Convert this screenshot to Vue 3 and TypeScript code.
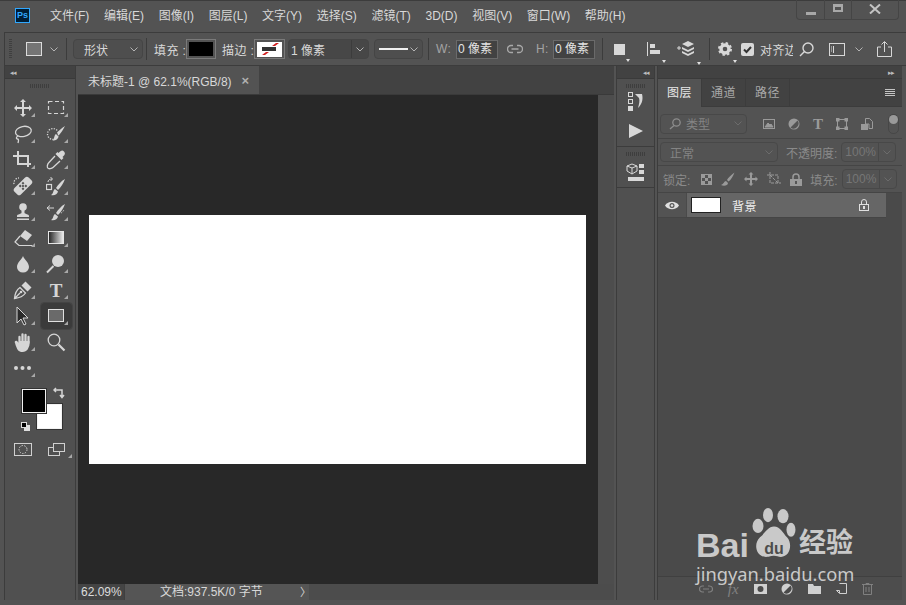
<template>
  <div class="app">
    <header class="titlebar">
      <div class="logo">Ps</div>
      <nav class="menu">
        <span v-for="m in menus" :key="m">{{ m }}</span>
      </nav>
      <div class="winbtns">
        <span class="wb wb-a"><i class="wb-min"></i></span>
        <span class="wb wb-b"><i class="wb-max"></i></span>
        <span class="wb wb-close">
          <svg viewBox="0 0 12 10" width="12" height="10" fill="none" stroke="#c4c4c4" stroke-width="2"><path d="M1 0.5l10 9M11 0.5l-10 9" /></svg>
        </span>
      </div>
    </header>

    <section class="options">
      <span class="grip-v"></span>
      <span class="shape-pick m14"></span>
      <svg class="chev m8" viewBox="0 0 8 5"><path d="M.5.5L4 4 7.5.5" /></svg>
      <span class="sep m8"></span>
      <div class="select w70 m6"><span>形状</span><svg class="chev" viewBox="0 0 8 5"><path d="M.5.5L4 4 7.5.5" /></svg></div>
      <span class="sep m3"></span>
      <span class="lab m7 w29">填充 :</span>
      <span class="swatch swatch-fill m3"><i class="fill-black"></i></span>
      <span class="lab m6 w28">描边 :</span>
      <span class="swatch m4">
        <svg viewBox="0 0 25 15" width="25" height="15">
          <rect width="25" height="15" fill="#fff" />
          <rect x="5" y="5" width="14" height="4" fill="#333" />
          <path d="M15 4l4-3h3l-4 3zM5 13l4-3h3l-4 3z" fill="#d21f1f" />
        </svg>
      </span>
      <div class="select w81 m3 split"><span>1 像素</span><b></b><svg class="chev" viewBox="0 0 8 5"><path d="M.5.5L4 4 7.5.5" /></svg></div>
      <div class="select w49 m5 line"><i></i><svg class="chev" viewBox="0 0 8 5"><path d="M.5.5L4 4 7.5.5" /></svg></div>
      <span class="sep m5"></span>
      <span class="lab dim m7 w14">W:</span>
      <span class="num m6">0 像素</span>
      <svg class="m9" viewBox="0 0 16 10" width="16" height="10" fill="none" stroke="#a8a8a8" stroke-width="1.3"><path d="M6 1.5H4a3.5 3.5 0 000 7h2M10 1.5h2a3.5 3.5 0 010 7h-2M4.5 5h7" /></svg>
      <span class="lab dim m13 w12">H:</span>
      <span class="num m5">0 像素</span>
      <span class="sep m7"></span>
      <span class="opt-ic m11 more-w"><i class="sq"></i></span>
      <span class="opt-ic m22 more-w">
        <svg viewBox="0 0 14 14" width="14" height="14" fill="#d8d8d8"><rect width="1" height="14" /><rect x="3" y="2" width="5" height="4" /><rect x="3" y="8" width="10" height="4" /></svg>
      </span>
      <span class="opt-ic m15 more-w">
        <svg viewBox="0 0 20 18" width="20" height="18" fill="#d8d8d8"><path d="M12 1l6 3-6 3-6-3zM6 7l6 3 6-3v2l-6 3-6-3zM6 11l6 3 6-3v2l-6 3-6-3zM1 7.500h1.500V6H3.500v1.500H5v1H3.500V10H2.500V8.500H1z" /></svg>
      </span>
      <span class="sep m13"></span>
      <span class="opt-ic m8 more-w">
        <svg viewBox="0 0 14 14" width="14" height="14"><circle cx="7" cy="7" r="4" fill="none" stroke="#d8d8d8" stroke-width="3.400" /><circle cx="7" cy="7" r="6" fill="none" stroke="#d8d8d8" stroke-width="2" stroke-dasharray="2.400 2.300" /></svg>
      </span>
      <span class="check m9">
        <svg viewBox="0 0 13 13" width="13" height="13"><path d="M3 6.500l2.500 2.500L10 4" fill="none" stroke="#333" stroke-width="2" /></svg>
      </span>
      <span class="lab snap m6">对齐边</span>
      <svg class="m6" viewBox="0 0 15 15" width="15" height="15" fill="none" stroke="#d8d8d8" stroke-width="1.400"><circle cx="9" cy="6" r="5" /><path d="M5.500 9.500L1 14" /></svg>
      <svg class="m15" viewBox="0 0 16 13" width="16" height="13" fill="none" stroke="#d8d8d8"><rect x=".5" y=".5" width="15" height="12" /><path d="M4.500 3v7M2 4h1M2 6h1M2 8h1" /></svg>
      <svg class="chev m10" viewBox="0 0 8 5"><path d="M.5.5L4 4 7.5.5" /></svg>
      <svg class="m14" viewBox="0 0 15 16" width="15" height="16" fill="none" stroke="#d8d8d8"><path d="M4 6H.5v9.500h14V6H11M7.500 11V1M4.500 3.500l3-3 3 3" /></svg>
    </section>

    <main class="workspace">
      <aside class="toolbox">
        <div class="strip"><span class="arrows">◂◂</span></div>
        <div class="grip-h"></div>
        <div class="tools">
          <div
            v-for="t in tools"
            :key="t.name"
            class="tool"
            :class="{ active: t.name === 'rect', more: t.more !== false }"
            :title="t.name"
          >
            <svg viewBox="0 0 20 20" width="20" height="20" v-html="t.svg"></svg>
          </div>
        </div>
        <div class="dots-row">
          <div class="tool more">
            <svg viewBox="0 0 20 20" width="20" height="20" fill="#d6d6d6"><circle cx="3" cy="10" r="2" /><circle cx="9.500" cy="10" r="2" /><circle cx="16" cy="10" r="2" /></svg>
          </div>
        </div>
        <div class="colors">
          <span class="bg-color"></span>
          <span class="fg-color"></span>
          <svg class="swap" viewBox="0 0 12 12" width="12" height="12" fill="none" stroke="#d6d6d6" stroke-width="1.500"><path d="M1 3h8v7M3 1L1 3l2 2M7 8l2 2.500L11 8" /></svg>
          <span class="mini-bg"></span>
          <span class="mini-fg"></span>
        </div>
        <div class="modes">
          <svg viewBox="0 0 18 13" width="18" height="13" fill="none" stroke="#d0d0d0"><rect x=".5" y=".5" width="17" height="12" /><circle cx="9" cy="6.500" r="4" stroke-dasharray="1.500 1.300" /></svg>
          <div class="tool-mode more">
            <svg viewBox="0 0 17 13" width="17" height="13" fill="none" stroke="#d0d0d0"><rect x=".5" y="4.500" width="11" height="8" /><rect x="5.500" y=".5" width="11" height="8" fill="#505050" /></svg>
          </div>
        </div>
      </aside>

      <section class="doc">
        <div class="tabs">
          <div class="tab">未标题-1 @ 62.1%(RGB/8)<span class="close">×</span></div>
        </div>
        <div class="doc-body">
          <div class="canvas"><div class="page"></div></div>
          <div class="vscroll"></div>
        </div>
        <footer class="status">
          <span class="zoom-val">62.09%</span>
          <span class="doc-info">文档:937.5K/0 字节<i>〉</i></span>
          <span class="hscroll"></span>
        </footer>
      </section>

      <aside class="dock">
        <div class="strip strip-right"><span class="arrows">◂◂</span></div>
        <div class="dock-sec first">
          <div class="grip-h"></div>
          <svg class="d-hist" viewBox="0 0 20 20" width="20" height="20">
            <g fill="none" stroke="#d8d8d8"><rect x="2.500" y=".5" width="4" height="4" /><rect x="2.500" y="7.500" width="4" height="4" /></g>
            <rect x="2" y="14" width="5" height="5" fill="#d8d8d8" />
            <path d="M9 2h7c1 4 1 9-4 14 1-4 2-7 1-10z" fill="#d8d8d8" />
          </svg>
          <svg class="play" viewBox="0 0 14 14" width="14" height="14"><path d="M0 0l14 7L0 14z" fill="#d8d8d8" /></svg>
        </div>
        <div class="dock-sec">
          <div class="grip-h"></div>
          <svg class="d-3d" viewBox="0 0 20 20" width="20" height="20">
            <path d="M6 1l5 2v5l-5 3-5-3V3z" fill="none" stroke="#d8d8d8" />
            <path d="M1 3l5 2 5-2M6 5v6" fill="none" stroke="#d8d8d8" />
            <rect x="13" y="1" width="5" height="4" fill="#d8d8d8" /><rect x="13" y="7" width="5" height="4" fill="#d8d8d8" />
            <rect x="2" y="14" width="16" height="4" fill="#d8d8d8" />
          </svg>
        </div>
        <div class="dock-rest"></div>
      </aside>

      <aside class="panel">
        <div class="strip strip-panel"><span class="arrows right">▸▸</span></div>
        <div class="ptabs">
          <span class="ptab on">图层</span>
          <span class="ptab">通道</span>
          <span class="ptab">路径</span>
          <span class="burger"><i></i><i></i><i></i><i></i></span>
        </div>
        <div class="prow filter">
          <div class="pselect w87">
            <svg viewBox="0 0 12 12" width="12" height="12" fill="none" stroke="#8c8c8c" stroke-width="1.300"><circle cx="7.500" cy="4.500" r="3.700" /><path d="M5 7.500L1 11" /></svg>
            <span>类型</span>
            <svg class="chev dimmed" viewBox="0 0 8 5"><path d="M.5.5L4 4 7.5.5" /></svg>
          </div>
          <div class="filter-icons">
            <svg viewBox="0 0 12 10" width="12" height="10" fill="none" stroke="#9a9a9a"><rect x=".5" y=".5" width="11" height="9" /><path d="M2 8l3-4 2 2 1-1 2 3z" fill="#9a9a9a" /></svg>
            <svg viewBox="0 0 12 12" width="12" height="12"><circle cx="6" cy="6" r="5.500" fill="#9a9a9a" /><path d="M9.500 2.500a5 5 0 01-7 7z" fill="#555" /></svg>
            <span class="t-glyph">T</span>
            <svg viewBox="0 0 12 12" width="12" height="12" fill="none" stroke="#9a9a9a"><rect x="1.500" y="1.500" width="9" height="9" /><g fill="#9a9a9a"><rect width="3" height="3" /><rect x="9" width="3" height="3" /><rect y="9" width="3" height="3" /><rect x="9" y="9" width="3" height="3" /></g></svg>
            <svg viewBox="0 0 12 12" width="12" height="12" fill="#9a9a9a"><path d="M4.500.5h4l3 3v7H8V6H4.500z" fill="none" stroke="#9a9a9a" /><rect y="6" width="7" height="6" /></svg>
          </div>
          <span class="toggle"><i></i></span>
        </div>
        <div class="prow mode">
          <div class="pselect w118"><span class="blend">正常</span><svg class="chev dimmed" viewBox="0 0 8 5"><path d="M.5.5L4 4 7.5.5" /></svg></div>
          <span class="plab op">不透明度:</span>
          <div class="pinput"><span>100%</span><b></b><svg class="chev dimmed" viewBox="0 0 8 5"><path d="M.5.5L4 4 7.5.5" /></svg></div>
        </div>
        <div class="prow lock">
          <span class="plab lock-lab">锁定:</span>
          <div class="lock-icons">
            <svg viewBox="0 0 11 11" width="11" height="11"><rect x=".5" y=".5" width="10" height="10" fill="none" stroke="#9a9a9a" /><path d="M1 1h3v3H1zM7 1h3v3H7zM4 4h3v3H4zM1 7h3v3H1zM7 7h3v3H7z" fill="#9a9a9a" /></svg>
            <svg viewBox="0 0 14 14" width="14" height="14" fill="#9a9a9a"><path d="M13.500.5C10 3 7 6 6 8l1.500 1.500C10 8 12 4 13.500.5zM5 9C3 9 3 12 0 13c3 1.500 7 .5 7-2z" /></svg>
            <svg viewBox="0 0 14 14" width="14" height="14" fill="#9a9a9a"><path d="M7 0l2.500 2.500H8V6h3.500V4.500L14 7l-2.500 2.500V8H8v3.500h1.500L7 14l-2.500-2.500H6V8H2.500v1.500L0 7l2.500-2.500V6H6V2.500H4.500z" /></svg>
            <svg viewBox="0 0 14 14" width="14" height="14" fill="none" stroke="#9a9a9a"><path d="M0 3h11v8M3 0v11h11M3 3l8 8" stroke-dasharray="3 1" /></svg>
            <svg viewBox="0 0 12 13" width="12" height="13"><path d="M3 6V4a3 3 0 016 0v2" fill="none" stroke="#9a9a9a" stroke-width="1.500" /><rect y="6" width="12" height="7" fill="#9a9a9a" /><rect x="5" y="8" width="2" height="3" fill="#555" /></svg>
          </div>
          <span class="plab fill-lab">填充:</span>
          <div class="pinput"><span>100%</span><b></b><svg class="chev dimmed" viewBox="0 0 8 5"><path d="M.5.5L4 4 7.5.5" /></svg></div>
        </div>
        <div class="layers">
          <div class="layer">
            <span class="eye">
              <svg viewBox="0 0 14 9" width="14" height="9"><path d="M0 4.500C3-.5 11-.5 14 4.500 11 9.500 3 9.500 0 4.500z" fill="#e0e0e0" /><circle cx="7" cy="4.500" r="2.500" fill="#555" /><circle cx="7" cy="4.500" r="1.300" fill="#e0e0e0" /></svg>
            </span>
            <div class="layer-bar">
              <span class="thumb"></span>
              <span class="lname">背景</span>
              <svg class="llock" viewBox="0 0 10 12" width="10" height="12" fill="none" stroke="#e0e0e0"><path d="M2.500 5V3a2.500 2.500 0 015 0v2" /><rect x=".5" y="5.500" width="9" height="6" /><rect x="4.500" y="7.500" width="1" height="2" /></svg>
            </div>
          </div>
        </div>
        <div class="pfooter">
          <svg viewBox="0 0 14 8" width="14" height="8" fill="none" stroke="#808080" stroke-width="1.200"><path d="M5 1H3.500a3 3 0 000 6H5M9 1h1.500a3 3 0 010 6H9M4 4h6" /></svg>
          <span class="fx">fx</span>
          <svg viewBox="0 0 13 10" width="13" height="10"><rect width="13" height="10" fill="#d0d0d0" /><circle cx="6.500" cy="5" r="3" fill="#4a4a4a" /></svg>
          <svg class="tri-b" viewBox="0 0 12 12" width="12" height="12"><circle cx="6" cy="6" r="5.500" fill="#d0d0d0" /><path d="M9.500 2.500a5 5 0 01-7 7z" fill="#4a4a4a" /></svg>
          <svg viewBox="0 0 13 10" width="13" height="10" fill="#d0d0d0"><path d="M0 0h5l1 2h7v8H0z" /></svg>
          <svg viewBox="0 0 11 11" width="11" height="11" fill="none" stroke="#d0d0d0"><path d="M3.500.5h7v10h-7L.5 7.500h3V10" /></svg>
          <svg viewBox="0 0 11 12" width="11" height="12" fill="none" stroke="#808080"><path d="M0 1.500h11M4 1.500V.5h3v1M1.500 1.500v10h8v-10M4 4v5M7 4v5" /></svg>
        </div>
      </aside>
    </main>

    <div class="watermark">
      <div class="wm-top">
        <span class="wm-bai">Bai</span>
        <svg class="wm-paw" viewBox="0 0 44 46" width="44" height="50" preserveAspectRatio="none">
          <ellipse cx="16" cy="6.500" rx="5" ry="6.500" fill="#c9c9c9" />
          <ellipse cx="31" cy="7.500" rx="5.500" ry="6.500" fill="#c9c9c9" />
          <ellipse cx="6" cy="16.500" rx="5.500" ry="6.500" fill="#c9c9c9" />
          <ellipse cx="39" cy="20" rx="4.500" ry="6.500" fill="#c9c9c9" />
          <path d="M22 17c6 0 9 6 13 10 6 6 3 18-6 18-3 0-4-1-7-1s-4 1-8 1C4 45 1 33 8 27c5-4 8-10 14-10z" fill="#c9c9c9" />
          <text x="22" y="42" text-anchor="middle">du</text>
        </svg>
        <span class="wm-cn">经验</span>
      </div>
      <div class="wm-url">jingyan.baidu.com</div>
    </div>
  </div>
</template>

<script setup lang="ts">
interface Tool {
  name: string
  svg: string
  more?: boolean
}

const menus: string[] = [
  '文件(F)', '编辑(E)', '图像(I)', '图层(L)', '文字(Y)', '选择(S)',
  '滤镜(T)', '3D(D)', '视图(V)', '窗口(W)', '帮助(H)'
]

const line = 'fill="none" stroke="#d6d6d6"'
const solid = 'fill="#d6d6d6"'

const tools: Tool[] = [
  { name: 'move', more: true, svg: `<path ${solid} d="M10 1l3 3h-2v5h5V7l3 3-3 3v-2h-5v5h2l-3 3-3-3h2v-5H4v2l-3-3 3-3v2h5V4H7z"/>` },
  { name: 'marquee', svg: `<rect x="2.500" y="3.500" width="15" height="12" ${line} stroke-width="1.200" stroke-dasharray="4 2.500"/>` },
  { name: 'lasso', svg: `<g ${line} stroke-width="1.300"><ellipse cx="10.500" cy="7.500" rx="8" ry="5" transform="rotate(-12 10 8)"/><path d="M5 12c-2 1-2 3-.5 3s1 2 .5 4"/></g>` },
  { name: 'quick-select', svg: `<circle cx="7" cy="10" r="5.500" fill="none" stroke="#d6d6d6" stroke-width="1.300" stroke-dasharray="1.300 1.300"/><path ${solid} d="M19 2c-2 4-4 7-6 9l-2-2c2-3 5-5 8-7zM10 10l2.500 2.500c-.5 3-3.500 4.500-6 4 2-1 1.500-5.500 3.500-6.500z"/>` },
  { name: 'crop', svg: `<path fill="none" stroke="#d6d6d6" stroke-width="2" d="M0 6h15v11M5 1v13h13"/>` },
  { name: 'eyedropper', svg: `<path ${solid} d="M18 1.500c1.500 1.500 1 3-.5 4.500l-1 1 1 1-2 2-6-6 2-2 1 1 1-1c1.500-1.500 3-2 4.500-.5z"/><path fill="none" stroke="#d6d6d6" stroke-width="1.300" d="M9 6L2.500 13c-1 1-1 2-1.200 3.200-.3 1.500 1 2.800 2.500 2.500 1.200-.2 2.200-.2 3.200-1.200L14 11"/>` },
  { name: 'healing', svg: `<g transform="rotate(-45 10 10)"><rect x="0" y="5.500" width="20" height="9" rx="2.500" ${solid}/><g fill="#505050"><rect x="7" y="7" width="2" height="2"/><rect x="11" y="7" width="2" height="2"/><rect x="7" y="11" width="2" height="2"/><rect x="11" y="11" width="2" height="2"/><rect x="9" y="9" width="2" height="2"/></g></g><path d="M1 8a5 5 0 015-6" fill="none" stroke="#d6d6d6" stroke-dasharray="1.300 1.300" stroke-width="1.300"/>` },
  { name: 'brush', svg: `<rect x=".5" y="8.500" width="5" height="5" ${line} stroke-width="1.200"/><path ${line} d="M2 6c0-2 2-3 4-3M4.500 1L6.500 3 4.500 5"/><path ${solid} d="M19 3c-2 5-4 8-7 11l-2-2c2-3 5-7 9-9zM9 13l3 2.500c-.5 3-4 4.500-7 3.500 2.500-1 2-5 4-6z"/>` },
  { name: 'stamp', svg: `<circle cx="10" cy="5" r="3.800" ${solid}/><path ${solid} d="M8.500 8h3v3c0 1 4.500 1 4.500 3v1H4v-1c0-2 4.500-2 4.500-3z"/><rect x="4" y="16.500" width="12" height="1.500" ${solid}/>` },
  { name: 'history', svg: `<path ${line} d="M1 6h7M4 3.500L1 6l3 2.500"/><path ${solid} d="M19 2c-2 5-4 8-7 11l-2-2c2-3 5-7 9-9zM9 12l3 2.500c-.5 3-4 4.500-7 3.500 2.500-1 2-5 4-6z"/><path d="M15 11a5 5 0 003-4" fill="none" stroke="#d6d6d6" stroke-dasharray="1.300 1.300"/>` },
  { name: 'eraser', svg: `<path ${solid} d="M12 2l7 5-5 6-7-5z"/><path ${line} stroke-width="1.200" d="M7 8l-5 6 4 3.500h13.500"/>` },
  { name: 'gradient', svg: `<defs><linearGradient id="g-tool"><stop offset="0" stop-color="#222"/><stop offset="1" stop-color="#f0f0f0"/></linearGradient></defs><rect x="2.500" y="3.500" width="15" height="12" fill="url(#g-tool)" stroke="#e6e6e6"/>` },
  { name: 'blur', svg: `<path ${solid} d="M10 1c1.500 4 6 7 6 11.500a6 6 0 01-12 0C4 8 8.500 5 10 1z" transform="translate(0 1) scale(1 .95)"/>` },
  { name: 'dodge', svg: `<circle cx="12" cy="7" r="6" ${solid}/><path d="M7.500 12L1 18.500" stroke="#d6d6d6" stroke-width="2"/>` },
  { name: 'pen', svg: `<path ${line} stroke-width="1.300" d="M1.500 18.500C2 13 4 9.500 7 7.500l5.500 5.500c-2 3-6 5-11 5.500zM1.500 18.500L7 13"/><circle cx="8" cy="12" r="1.300" ${solid}/><path ${solid} d="M8.500 5.500L12.500 1.500 18.500 7.500 14.500 11.500z"/>` },
  { name: 'type', svg: `<text x="10" y="16.500" text-anchor="middle" font-family="Liberation Serif, serif" font-weight="700" font-size="19" fill="#d6d6d6">T</text>` },
  { name: 'path-select', svg: `<path d="M4 1v16l4-4 3 6 2-1-3-6h5z" fill="#2a2a2a" stroke="#d6d6d6"/>` },
  { name: 'rect', svg: `<rect x="2.500" y="3.500" width="15" height="12" fill="#6a6a6a" stroke="#e0e0e0"/>` },
  { name: 'hand', svg: `<g stroke="#d6d6d6" stroke-width="2.300" stroke-linecap="round" fill="none"><path d="M6.500 11V5M9.500 10V2.500M12.500 10V3M15.500 11V5"/></g><path ${solid} d="M2 11c-1-1.500 .5-3 2-2l2 2 .5-2h10v4c-1 3-2 7-7 7-4 0-5.500-2-7.500-9z"/>` },
  { name: 'zoom', more: false, svg: `<circle cx="8" cy="8" r="5.800" ${line} stroke-width="1.300"/><path d="M12.500 12.500l6 6" stroke="#d6d6d6" stroke-width="2.200"/>` }
]
</script>

<style>
html,
body {
  margin: 0;
  background: #535353;
  overflow: hidden;
}
</style>

<style scoped>
.app {
  position: relative;
  width: 906px;
  height: 605px;
  background: #535353;
  font-family: "Liberation Sans", "Noto Sans CJK SC", sans-serif;
  font-size: 12px;
  color: #d8d8d8;
  overflow: hidden;
  display: flex;
  flex-direction: column;
}

/* title bar */
.titlebar {
  height: 32px;
  flex: none;
  display: flex;
  align-items: flex-start;
  box-sizing: border-box;
  border-top: 1px solid #3c3c3c;
}
.logo {
  width: 13px;
  height: 13px;
  margin: 7px 0 0 15px;
  border: 1px solid #31a8ff;
  background: #001e36;
  color: #31a8ff;
  font: 700 9px/13px "Liberation Sans", sans-serif;
  text-align: center;
}
.menu {
  display: flex;
  gap: 14.7px;
  margin: 7px 0 0 20px;
  line-height: 16px;
  white-space: nowrap;
}
.winbtns {
  position: absolute;
  top: 0;
  left: 796px;
  width: 103px;
  height: 20px;
  box-sizing: border-box;
  display: flex;
  border: 1px solid #454545;
  border-top: none;
  border-radius: 0 0 4px 4px;
}
.wb {
  display: flex;
  align-items: center;
  justify-content: center;
  box-sizing: border-box;
  border-right: 1px solid #454545;
}
.wb-a {
  width: 28px;
}
.wb-b {
  width: 27px;
}
.wb-close {
  flex: 1;
  border-right: none;
}
.wb-close svg {
  margin-top: -2px;
}
.wb-min {
  width: 10px;
  height: 3px;
  margin-top: 8px;
  background: #a8a8a8;
}
.wb-max {
  width: 6px;
  height: 3px;
  margin-top: -4px;
  border: 2px solid #a8a8a8;
  border-top-width: 3px;
}

/* options bar */
.options {
  height: 34px;
  flex: none;
  margin-left: 4px;
  display: flex;
  align-items: center;
  box-sizing: border-box;
  border-top: 1px solid #3c3c3c;
  border-left: 1px solid #3c3c3c;
  border-bottom: 1px solid #3c3c3c;
  white-space: nowrap;
}
.grip-v {
  width: 3px;
  height: 20px;
  margin-left: 4px;
  background: repeating-linear-gradient(#3f3f3f 0 1px, transparent 1px 2px);
}
.shape-pick {
  width: 14px;
  height: 12px;
  background: #757575;
  border: 1px solid #dcdcdc;
}
.chev {
  width: 8px;
  height: 5px;
  flex: none;
  fill: none;
  stroke: #b4b4b4;
}
.chev.dimmed {
  stroke: #6c6c6c;
}
.sep {
  width: 1px;
  height: 22px;
  background: #3c3c3c;
  flex: none;
}
.m3 { margin-left: 3px; }
.m4 { margin-left: 4px; }
.m5 { margin-left: 5px; }
.m6 { margin-left: 6px; }
.m7 { margin-left: 7px; }
.m8 { margin-left: 8px; }
.m9 { margin-left: 9px; }
.m10 { margin-left: 10px; }
.m11 { margin-left: 11px; }
.m13 { margin-left: 13px; }
.m14 { margin-left: 14px; }
.m15 { margin-left: 15px; }
.m22 { margin-left: 22px; }
.w70 { width: 70px; }
.w81 { width: 81px; }
.w49 { width: 49px; }
.w29 { width: 29px; }
.w28 { width: 28px; }
.w14 { width: 14px; }
.w12 { width: 12px; }

.select {
  height: 20px;
  box-sizing: border-box;
  flex: none;
  display: flex;
  align-items: center;
  justify-content: space-between;
  padding: 0 4px 0 10px;
  border: 1px solid #454545;
  border-radius: 4px;
  background: #4e4e4e;
}
.select.split {
  padding-left: 2px;
  background: #474747;
}
.select.split span {
  flex: 1;
}
.select.split b {
  width: 1px;
  align-self: stretch;
  background: #3c3c3c;
  margin-right: 4px;
}
.line i {
  width: 29px;
  height: 2px;
  background: #f0f0f0;
  margin-left: -6px;
}
.lab {
  flex: none;
  font-size: 12px;
  letter-spacing: 0.4px;
}
.lab.dim {
  color: #a4a4a4;
}
.lab.snap {
  width: 33px;
  overflow: hidden;
}
.swatch {
  width: 31px;
  height: 20px;
  box-sizing: border-box;
  flex: none;
  display: flex;
  padding: 2px;
  border: 1px solid #7a7a7a;
}
.swatch-fill {
  width: 30px;
}
.fill-black {
  flex: 1;
  background: #000;
}
.num {
  width: 42px;
  height: 19px;
  box-sizing: border-box;
  flex: none;
  padding-left: 1px;
  line-height: 17px;
  border: 1px solid #6a6a6a;
  background: #424242;
  color: #e4e4e4;
}
.opt-ic {
  position: relative;
  flex: none;
  display: flex;
}
.sq {
  width: 11px;
  height: 11px;
  background: #d8d8d8;
}
.more-w::after {
  content: "";
  position: absolute;
  right: -5px;
  bottom: -7px;
  border: 2px solid transparent;
  border-top: 3px solid #e0e0e0;
  border-bottom: none;
}
.check {
  width: 13px;
  height: 13px;
  flex: none;
  display: flex;
  background: #d8d8d8;
  border-radius: 2px;
}

/* workspace */
.workspace {
  flex: 1;
  min-height: 0;
  display: flex;
  margin: 0 4px 5px 4px;
}
.strip {
  height: 12px;
  flex: none;
  display: flex;
  align-items: center;
  padding: 0 5px;
  background: #424242;
  border-bottom: 1px solid #3a3a3a;
}
.strip-right {
  justify-content: flex-end;
}
.strip-panel {
  padding-right: 8px;
}
.arrows {
  font-size: 7px;
  line-height: 1;
  letter-spacing: -1px;
  color: #bdbdbd;
}
.arrows.right {
  margin-left: auto;
}
.grip-h {
  width: 20px;
  height: 4px;
  margin: 5px auto 0;
  background: repeating-linear-gradient(90deg, #3e3e3e 0 1px, transparent 1px 2px);
}

.toolbox {
  width: 72px;
  flex: none;
  display: flex;
  flex-direction: column;
  background: #505050;
  border-left: 1px solid #3c3c3c;
  border-right: 1px solid #3c3c3c;
  box-sizing: border-box;
}
.tools {
  display: grid;
  grid-template-columns: 33px 33px;
  grid-auto-rows: 26px;
  margin: 7px 0 0 1px;
}
.tool {
  position: relative;
  display: flex;
  align-items: center;
  justify-content: center;
  border-radius: 3px;
}
.tool.active {
  background: #3b3b3b;
  outline: 1px solid #444;
  margin-left: 2px;
  padding-right: 2px;
}
.tool.active.more::after {
  left: 23px;
}
.more::after {
  content: "";
  position: absolute;
  left: 25px;
  top: 18px;
  width: 0;
  height: 0;
  border-left: 4px solid transparent;
  border-bottom: 4px solid #a8a8a8;
}
.dots-row {
  width: 33px;
  height: 26px;
  margin-left: 1px;
  display: flex;
}
.dots-row .tool {
  flex: 1;
}
.colors {
  position: relative;
  height: 46px;
  margin-top: 8px;
}
.fg-color,
.bg-color {
  position: absolute;
  box-sizing: border-box;
  border: 1px solid #f2f2f2;
  outline: 1px solid #333;
}
.fg-color {
  left: 17px;
  top: 0;
  width: 24px;
  height: 24px;
  background: #000;
}
.bg-color {
  left: 32px;
  top: 15px;
  width: 25px;
  height: 25px;
  background: #fff;
}
.swap {
  position: absolute;
  left: 48px;
  top: -2px;
}
.mini-fg,
.mini-bg {
  position: absolute;
  width: 6px;
  height: 6px;
  box-sizing: border-box;
}
.mini-fg {
  left: 16px;
  top: 33px;
  background: #000;
  border: 1px solid #ddd;
}
.mini-bg {
  left: 19px;
  top: 36px;
  background: #ddd;
}
.modes {
  display: flex;
  align-items: center;
  gap: 16px;
  margin: 8px 0 0 9px;
}
.tool-mode {
  position: relative;
  display: flex;
}
.tool-mode.more::after {
  left: 20px;
  top: 11px;
}

.doc {
  width: 536px;
  flex: none;
  margin-left: 2px;
  display: flex;
  flex-direction: column;
}
.tabs {
  height: 29px;
  flex: none;
  display: flex;
  background: #424242;
  border-bottom: 1px solid #3a3a3a;
  box-sizing: border-box;
}
.tab {
  width: 181px;
  display: flex;
  align-items: center;
  box-sizing: border-box;
  padding: 1px 0 0 10px;
  background: #535353;
  white-space: nowrap;
}
.close {
  margin-left: 10px;
  font-size: 13px;
  font-weight: 700;
  color: #b0b0b0;
}
.doc-body {
  flex: 1;
  min-height: 0;
  display: flex;
}
.canvas {
  flex: 1;
  display: flex;
  align-items: center;
  justify-content: center;
  padding-right: 1px;
  background: #282828;
}
.page {
  width: 497px;
  height: 249px;
  background: #fff;
}
.vscroll {
  width: 16px;
  background: #4d4d4d;
}
.status {
  height: 16px;
  flex: none;
  display: flex;
  line-height: 16px;
  white-space: nowrap;
}
.zoom-val {
  width: 47px;
  box-sizing: border-box;
  padding-left: 3px;
  background: #444;
  border-right: 1px solid #3f3f3f;
  color: #dcdcdc;
}
.doc-info {
  width: 184px;
  box-sizing: border-box;
  padding-left: 35px;
  background: #555;
  position: relative;
}
.doc-info i {
  position: absolute;
  left: 175px;
  font-style: normal;
  font-size: 11px;
}
.hscroll {
  flex: 1;
  background: #4c4c4c;
}

.dock {
  width: 39px;
  flex: none;
  margin-left: 2px;
  display: flex;
  flex-direction: column;
  border-left: 1px solid #3c3c3c;
  border-right: 1px solid #3c3c3c;
  box-sizing: border-box;
  background: #505050;
}
.dock-sec {
  display: flex;
  flex-direction: column;
  align-items: center;
  border-bottom: 1px solid #3c3c3c;
  height: 41px;
  gap: 3px;
  box-sizing: border-box;
}
.dock-sec.first {
  height: 68px;
}
.d-hist {
  margin-top: 1px;
}
.d-3d {
  margin-top: 4px;
}
.dock-sec .play {
  margin-top: 9px;
}
.dock-rest {
  flex: 1;
}

.panel {
  width: 245px;
  flex: none;
  margin-left: 2px;
  display: flex;
  flex-direction: column;
  box-sizing: border-box;
  border-left: 1px solid #3c3c3c;
  background: #4a4a4a;
}
.ptabs {
  height: 28px;
  flex: none;
  display: flex;
  align-items: center;
  background: #424242;
  border-bottom: 1px solid #3c3c3c;
  box-sizing: border-box;
}
.ptab {
  width: 44px;
  height: 100%;
  display: flex;
  align-items: center;
  justify-content: center;
  box-sizing: border-box;
  padding-bottom: 2px;
  border-right: 1px solid #3c3c3c;
  color: #a8a8a8;
  letter-spacing: 0.4px;
}
.ptab.on {
  background: #535353;
  color: #e8e8e8;
  height: calc(100% + 1px);
  padding-bottom: 3px;
}
.burger {
  margin-left: auto;
  margin-right: 7px;
  width: 10px;
  display: flex;
  flex-direction: column;
  gap: 1px;
}
.burger i {
  height: 1px;
  background: #c4c4c4;
}
.prow {
  display: flex;
  align-items: center;
  box-sizing: border-box;
  background: #535353;
  border-bottom: 1px solid #454545;
  flex: none;
}
.filter {
  height: 32px;
  padding: 2px 0 0 2px;
}
.mode {
  height: 27px;
  padding-left: 2px;
}
.lock {
  height: 27px;
}
.pselect {
  height: 20px;
  box-sizing: border-box;
  display: flex;
  align-items: center;
  padding: 0 4px 0 8px;
  gap: 5px;
  border: 1px solid #484848;
  border-radius: 4px;
  color: #848484;
}
.pselect .chev {
  margin-left: auto;
}
.w87 { width: 87px; }
.w118 { width: 118px; }
.blend {
  color: #848484;
  padding-left: 1px;
}
.filter-icons {
  display: flex;
  align-items: center;
  gap: 13px;
  margin-left: 16px;
}
.t-glyph {
  font: 700 15px/12px "Liberation Serif", serif;
  color: #9a9a9a;
}
.toggle {
  position: relative;
  width: 9px;
  height: 18px;
  margin-left: 15px;
  border: 1px solid #474747;
  border-radius: 5px;
}
.toggle i {
  position: absolute;
  left: 0;
  top: 0;
  width: 9px;
  height: 9px;
  border-radius: 50%;
  background: #9a9a9a;
}
.plab {
  color: #8a8a8a;
  white-space: nowrap;
}
.op {
  margin-left: 8px;
}
.lock-lab {
  margin-left: 5px;
}
.fill-lab {
  margin-left: 8px;
}
.lock-icons {
  display: flex;
  align-items: center;
  gap: 9px;
  margin-left: 11px;
}
.pinput {
  width: 55px;
  height: 20px;
  box-sizing: border-box;
  margin-left: 4px;
  display: flex;
  align-items: center;
  padding-left: 3px;
  border: 1px solid #484848;
  border-radius: 4px;
  color: #767676;
}
.pinput span {
  flex: 1;
}
.pinput b {
  width: 1px;
  align-self: stretch;
  background: #484848;
  margin-right: 4px;
}
.pinput .chev {
  margin-right: 4px;
}
.layers {
  flex: 1;
  min-height: 0;
  padding-top: 0;
}
.layer {
  height: 25px;
  display: flex;
  background: #535353;
  margin-right: 16px;
  border-bottom: 1px solid #454545;
  box-sizing: border-box;
}
.eye {
  width: 29px;
  flex: none;
  display: flex;
  align-items: center;
  justify-content: center;
  border-right: 1px solid #4a4a4a;
  box-sizing: border-box;
}
.layer-bar {
  flex: 1;
  display: flex;
  align-items: center;
  background: #666;
  padding-left: 4px;
}
.thumb {
  width: 30px;
  height: 16px;
  box-sizing: border-box;
  background: #fff;
  border: 1px solid #222;
}
.lname {
  margin-left: 11px;
  color: #f0f0f0;
  letter-spacing: 0.4px;
}
.llock {
  margin-left: auto;
  margin-right: 17px;
}
.pfooter {
  height: 24px;
  flex: none;
  display: flex;
  align-items: center;
  justify-content: space-between;
  box-sizing: border-box;
  padding: 0 29px 0 41px;
  background: #4d4d4d;
  border-top: 1px solid #404040;
}
.fx {
  font: italic 15px/12px "Liberation Serif", serif;
  color: #808080;
}

/* watermark sits on top of the panel */
.watermark {
  position: absolute;
  left: 696px;
  top: 508px;
  width: 162px;
  color: #c9c9c9;
  pointer-events: none;
}
.wm-top {
  display: flex;
  align-items: flex-end;
  height: 50px;
}
.wm-bai {
  font: 700 34px/34px "Liberation Sans", sans-serif;
  width: 56px;
  margin-bottom: -4px;
}
.wm-paw {
  flex: none;
}
.wm-paw text {
  font: 700 16px "Liberation Sans", sans-serif;
  fill: #4d4d4d;
}
.wm-cn {
  font: 700 27px/34px "Noto Sans CJK SC", sans-serif;
  margin-left: 3px;
  white-space: nowrap;
}
.wm-url {
  margin-top: 4px;
  font: 400 18.3px/24px "Noto Sans", sans-serif;
  white-space: nowrap;
}
</style>
